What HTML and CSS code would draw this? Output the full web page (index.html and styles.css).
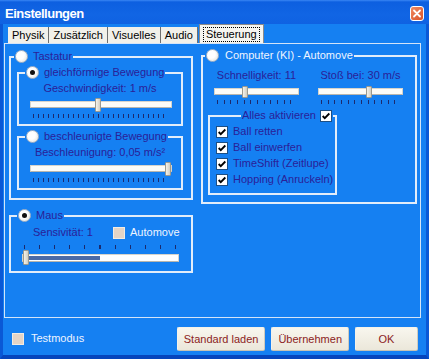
FILE: index.html
```html
<!DOCTYPE html>
<html lang="de">
<head>
    <meta charset="UTF-8">
    <meta name="viewport" content="width=device-width, initial-scale=1.0">
    <title>Einstellungen</title>
    <link rel="stylesheet" href="styles.css">
</head>
<body>
    <header class="titlebar">
        <span class="title">Einstellungen</span>
        <span class="close">
            <svg viewBox="0 0 14 15" width="14" height="15"><path d="M4 4.5l6 6M10 4.5l-6 6" stroke="#fff" stroke-width="1.8" stroke-linecap="round"/></svg>
        </span>
    </header>

    <div class="frame">
        <nav class="tabs">
            <span class="tab">Physik</span>
            <span class="tab">Zusätzlich</span>
            <span class="tab">Visuelles</span>
            <span class="tab">Audio</span>
            <span class="tab active"><span class="focus">Steuerung</span></span>
        </nav>

        <main class="panel">
            <div class="col-left">
                <fieldset class="group keys">
                    <legend><span class="radio"></span>Tastatur</legend>

                    <fieldset class="group sub">
                        <legend><span class="radio on"></span>gleichförmige Bewegung</legend>
                        <div class="caption">Geschwindigkeit: 1 m/s</div>
                        <div class="slider"><div class="track"><span class="thumb" style="--v: 0.48"></span></div></div>
                        <div class="ticks"></div>
                    </fieldset>

                    <fieldset class="group sub second">
                        <legend><span class="radio"></span>beschleunigte Bewegung</legend>
                        <div class="caption">Beschleunigung: 0,05 m/s²</div>
                        <div class="slider"><div class="track"><span class="thumb" style="--v: 1"></span></div></div>
                        <div class="ticks"></div>
                    </fieldset>
                </fieldset>

                <fieldset class="group mouse">
                    <legend><span class="radio on"></span>Maus</legend>
                    <div class="mouse-row">
                        <span class="sens">Sensivität: 1</span>
                        <span class="cb"></span>
                        <span class="light">Automove</span>
                    </div>
                    <div class="ticks wide"></div>
                    <div class="slider range-slider">
                        <div class="track"><div class="range"></div><span class="thumb" style="--v: 0"></span></div>
                    </div>
                </fieldset>
            </div>

            <fieldset class="group ai">
                <legend><span class="radio"></span><span class="light">Computer (KI) - Automove</span></legend>
                <div class="pair">
                    <div class="col">
                        <div class="caption">Schnelligkeit: 11</div>
                        <div class="slider small"><div class="track"><span class="thumb" style="--v: 0.35"></span></div></div>
                        <div class="ticks short"></div>
                    </div>
                    <div class="col">
                        <div class="caption">Stoß bei: 30 m/s</div>
                        <div class="slider small"><div class="track"><span class="thumb" style="--v: 0.61"></span></div></div>
                        <div class="ticks short"></div>
                    </div>
                </div>

                <fieldset class="group all">
                    <legend>Alles aktivieren <span class="cb on"><svg viewBox="0 0 12 12" width="10" height="10"><path d="M2 6l2.5 2.5L10 3" fill="none" stroke="#000" stroke-width="2.2"/></svg></span></legend>
                    <div class="checks">
                        <div class="check"><span class="cb on"><svg viewBox="0 0 12 12" width="10" height="10"><path d="M2 6l2.5 2.5L10 3" fill="none" stroke="#000" stroke-width="2.2"/></svg></span>Ball retten</div>
                        <div class="check"><span class="cb on"><svg viewBox="0 0 12 12" width="10" height="10"><path d="M2 6l2.5 2.5L10 3" fill="none" stroke="#000" stroke-width="2.2"/></svg></span>Ball einwerfen</div>
                        <div class="check"><span class="cb on"><svg viewBox="0 0 12 12" width="10" height="10"><path d="M2 6l2.5 2.5L10 3" fill="none" stroke="#000" stroke-width="2.2"/></svg></span>TimeShift (Zeitlupe)</div>
                        <div class="check"><span class="cb on"><svg viewBox="0 0 12 12" width="10" height="10"><path d="M2 6l2.5 2.5L10 3" fill="none" stroke="#000" stroke-width="2.2"/></svg></span>Hopping (Anruckeln)</div>
                    </div>
                </fieldset>
            </fieldset>
        </main>

        <footer class="footer">
            <label class="testmode"><span class="cb"></span><span class="light">Testmodus</span></label>
            <div class="buttons">
                <button class="btn">Standard laden</button>
                <button class="btn">Übernehmen</button>
                <button class="btn">OK</button>
            </div>
        </footer>
    </div>
</body>
</html>
```

FILE: styles.css
```css
* {
    box-sizing: border-box;
}
html, body {
    margin: 0;
    padding: 0;
}
body {
    width: 429px;
    height: 359px;
    overflow: hidden;
    background: #1580f2;
    font-family: "Liberation Sans", Arial, sans-serif;
    font-size: 11px;
    line-height: 13px;
    color: #2a2198;
}

/* title bar */
.titlebar {
    height: 24px;
    display: flex;
    align-items: center;
    justify-content: space-between;
    padding: 0 5px;
    background: linear-gradient(#3a86f4 0, #0d5fe0 2px, #1165e4 60%, #0f62e2);
}
.title {
    color: #fff;
    font-weight: bold;
    font-size: 13px;
    letter-spacing: -0.5px;
    margin-top: 2px;
}
.close {
    width: 14px;
    height: 15px;
    margin-top: 3px;
    border: 1px solid #fff;
    border-radius: 3px;
    background: linear-gradient(135deg, #f08a62, #d9532a);
    display: flex;
}
.close svg {
    margin: -1px;
}

/* window body */
.frame {
    height: 335px;
    display: flex;
    flex-direction: column;
    border-left: 3px solid #0a58d6;
    border-right: 3px solid #0a58d6;
    border-bottom: 4px solid #0645bc;
}

/* tabs */
.tabs {
    height: 19px;
    display: flex;
    align-items: flex-end;
    padding-left: 5px;
}
.tab {
    height: 16px;
    line-height: 16px;
    padding: 0 4px;
    color: #000;
    background: #f1f0ea;
    border-right: 1px solid #6f6f6f;
}
.tab.active {
    height: 20px;
    margin-left: 1px;
    margin-bottom: -1px;
    padding: 2px 3px;
    background: #f6f5f0;
    border: 1px solid #8a8a8a;
    border-bottom: none;
}
.focus {
    display: block;
    line-height: 13px;
    padding: 0 2px;
    border: 1px dotted #000;
}

/* tab panel */
.panel {
    margin-left: 1px;
    width: 417px;
    height: 275px;
    border: 1px solid #d4e4f8;
    padding: 5px 0 0 4px;
    display: grid;
    grid-template-columns: 184px 216px;
    column-gap: 8px;
    align-items: start;
}
.col-left {
    margin-top: 1px;
}

/* group boxes */
.group {
    margin: 0;
    padding: 0;
    min-width: 0;
    border: 2px solid #e2edfa;
}
.group > legend {
    display: flex;
    align-items: center;
    gap: 5px;
    height: 13px;
    padding: 0 1px;
}
.keys {
    padding-bottom: 8px;
}
.keys > legend {
    margin-left: 3px;
}
.sub {
    margin: 3px 8px 0 6px;
    padding-bottom: 6px;
}
.sub > legend {
    margin-left: 6px;
}
.sub.second {
    margin-top: 4px;
}
.mouse {
    margin-top: 9px;
    padding-bottom: 6px;
}
.mouse > legend {
    margin-left: 6px;
}
.ai {
    padding-bottom: 7px;
}
.ai > legend {
    margin-left: 2px;
    gap: 6px;
}
.all {
    margin: 5px 0 0 5px;
    width: 129px;
    padding-bottom: 7px;
}
.all > legend {
    margin-left: 31px;
    gap: 4px;
}

.light {
    color: #eef4ff;
}
.caption {
    margin-top: 3px;
    text-align: center;
}

/* radio / checkbox */
.radio {
    width: 13px;
    height: 13px;
    flex: none;
    border-radius: 50%;
    border: 1px solid #a9b6c6;
    background: radial-gradient(circle at 40% 40%, #ffffff 40%, #dedcd2);
    display: flex;
    align-items: center;
    justify-content: center;
}
.radio.on::after {
    content: "";
    width: 5px;
    height: 5px;
    border-radius: 50%;
    background: #111;
}
.cb {
    width: 12px;
    height: 12px;
    flex: none;
    border: 1px solid #f2ebe2;
    background: #e4d4c6;
    display: flex;
    align-items: center;
    justify-content: center;
}
.cb.on {
    background: #fff;
    border-color: #1d4f84;
}

/* sliders */
.slider {
    margin: 3px 9px 0 11px;
    height: 14px;
    padding-top: 3px;
}
.track {
    position: relative;
    height: 7px;
    background: #fcfcf8;
    border: 1px solid #d6d4cc;
    border-bottom-color: #b8b6ae;
}
.thumb {
    position: absolute;
    top: -4px;
    left: calc(var(--v) * (100% - 6px));
    width: 6px;
    height: 14px;
    border-radius: 1px;
    background: linear-gradient(90deg, #f4f2ea, #d2cec2);
    border: 1px solid #9c9a90;
}
.ticks {
    height: 4px;
    margin: 2px 14px 0;
    background: repeating-linear-gradient(to right, #1b2a6e 0 1px, transparent 1px 5px);
}
.pair {
    display: grid;
    grid-template-columns: 85px 85px;
    column-gap: 19px;
    margin: 4px 0 0 11px;
}
.slider.small {
    margin: 3px 0 0;
    height: 13px;
}
.slider.small .thumb {
    height: 12px;
    top: -3px;
}
.ticks.short {
    margin: 2px 2px 0 3px;
    background: repeating-linear-gradient(to right, #1b2a6e 0 1px, transparent 1px 6.67px);
}

/* mouse group */
.mouse-row {
    display: flex;
    align-items: center;
    margin: 4px 0 0 22px;
}
.sens {
    width: 80px;
}
.mouse-row .cb {
    margin-right: 5px;
}
.ticks.wide {
    margin: 6px 15px 0 13px;
    background: repeating-linear-gradient(to right, #1b2a6e 0 1px, transparent 1px 15.1px);
}
.range-slider {
    margin: 1px 12px 0 11px;
    height: 15px;
    padding-top: 4px;
}
.range-slider .track {
    height: 8px;
    background: #fff;
}
.range {
    margin: 1px 0 0 5px;
    width: 72px;
    height: 4px;
    background: #4b6aa6;
}
.range-slider .thumb {
    top: -5px;
    height: 15px;
}

/* checklist */
.checks {
    display: flex;
    flex-direction: column;
    gap: 3px;
    margin-top: 3px;
    padding-left: 6px;
}
.check {
    display: flex;
    align-items: center;
    gap: 5px;
    height: 13px;
}

/* footer */
.footer {
    flex: 1;
    display: flex;
    align-items: flex-start;
    justify-content: space-between;
    padding: 9px 8px 0 9px;
}
.testmode {
    display: flex;
    align-items: center;
    gap: 7px;
    margin-top: 5px;
}
.buttons {
    display: flex;
    gap: 6px;
}
.btn {
    height: 24px;
    min-width: 63px;
    padding: 0 6px;
    font-family: "Liberation Sans", Arial, sans-serif;
    font-size: 11px;
    color: #8c1c1c;
    background: linear-gradient(#f8f6ee, #ebe7da);
    border: 1px solid #f4f2ea;
    border-right-color: #cfcbbd;
    border-bottom-color: #c6c2b4;
    border-radius: 2px;
}
```
